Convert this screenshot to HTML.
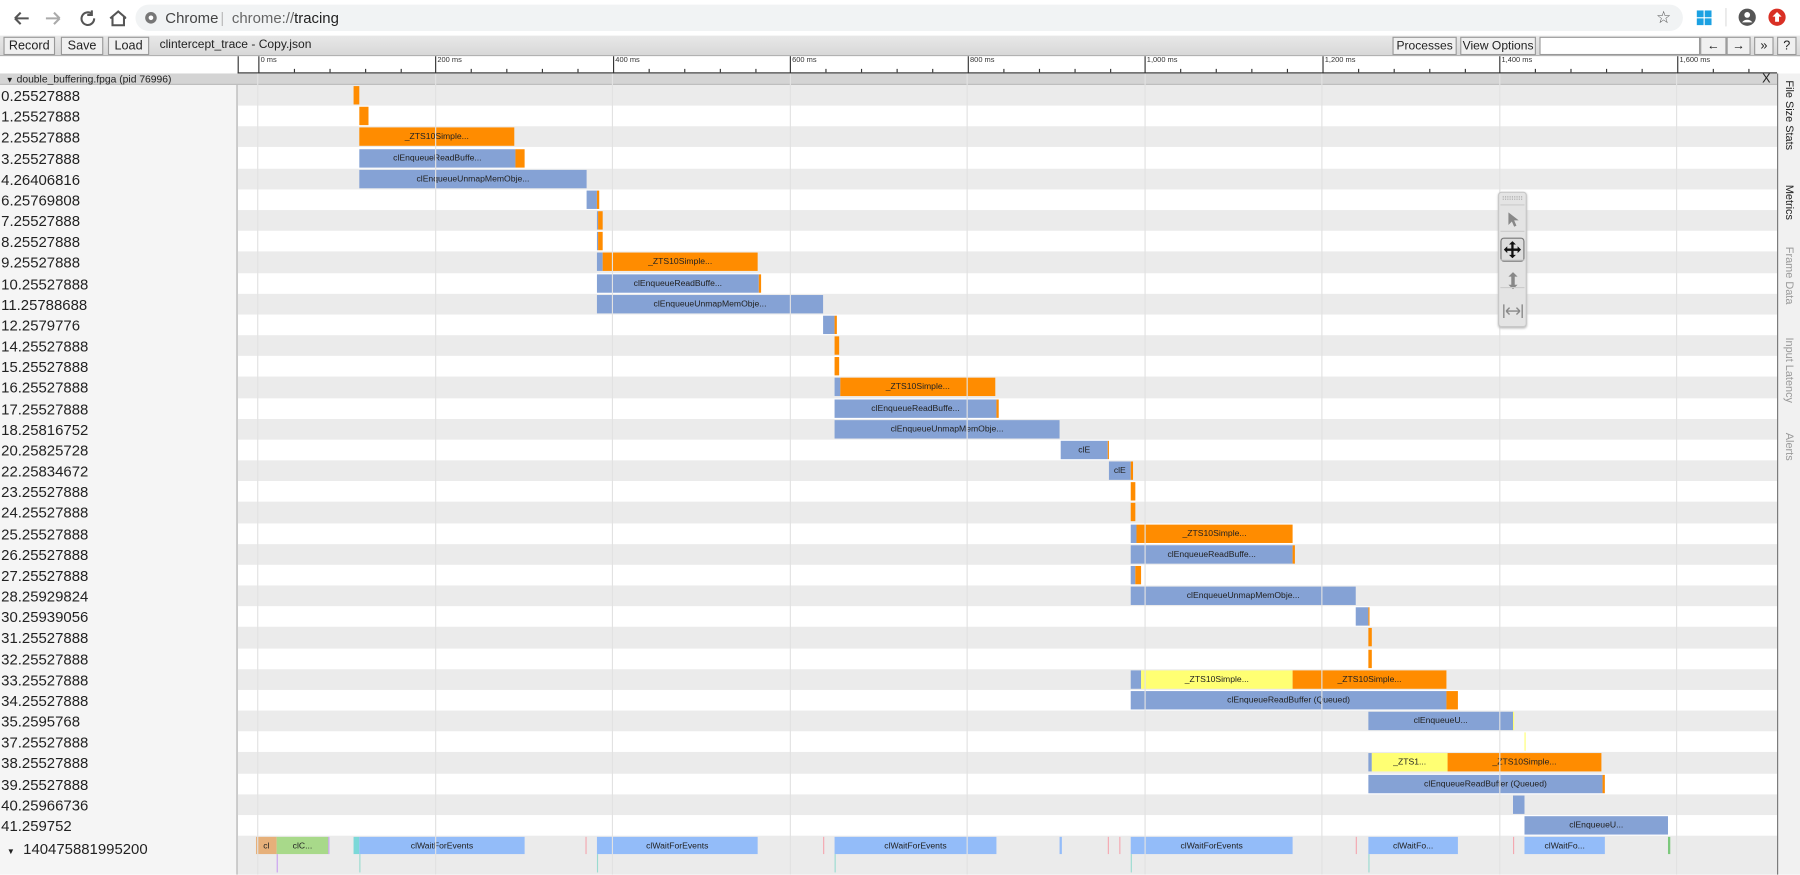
<!DOCTYPE html>
<html><head><meta charset="utf-8"><style>
*{box-sizing:border-box;margin:0;padding:0}
html,body{width:1800px;height:875px;overflow:hidden;background:#fff;font-family:"Liberation Sans",sans-serif}
#w{position:absolute;left:0;top:0;width:1568px;height:762px;transform:scale(1.14796);transform-origin:0 0;overflow:hidden;background:#fff}
.top{position:absolute;left:0;top:0;width:1568px;height:31px;background:#fff}
.omni{position:absolute;left:118px;top:4px;width:1348px;height:23px;border-radius:12px;background:#f1f3f4;font-size:13px;color:#444;line-height:23px}
.tb{position:absolute;left:0;top:31px;width:1568px;height:18px;background:linear-gradient(#e8e8e8,#d8d8d8);border-bottom:1px solid #aaa}
.btn{position:absolute;top:1px;height:16px;border:1px solid #999;background:#f0f0f0;font-size:11px;line-height:14px;text-align:center;color:#222;white-space:nowrap;overflow:hidden}
.ruler{position:absolute;left:207px;top:49px;width:1341px;height:15px;border-bottom:1px solid #333;background:#fff;border-left:1px solid #333}
.tk{position:absolute;top:0;height:15px;border-left:1px solid #333;font-size:6.5px;color:#333;padding-left:1px}
.st{position:absolute;bottom:0;height:3px;border-left:1px solid #333}
.ph{position:absolute;left:0;top:64px;width:1548px;height:10px;background:#d4d4d4;font-size:9px;line-height:10px;color:#222;border-bottom:1px solid #bbb}
.lp{position:absolute;left:0;top:74px;width:207px;height:688px;background:#f5f5f5;border-right:1px solid #aaa}
.row{position:absolute;left:0;width:1548px;height:18.17px}
.row.g .tr{background:#ebebeb}
.tr{position:absolute;left:207px;width:1341px;top:0;height:100%}
.lb{position:absolute;left:1px;top:1px;font-size:13px;line-height:17px;color:#222}
.b{position:absolute;top:1px;height:16px;font-size:7.5px;line-height:16px;text-align:center;color:#222;overflow:hidden;white-space:nowrap}
.o{background:#ff8c00}.u{background:#85a2d5}.y{background:#ffff73}.l{background:#93bcf9}
.gl{position:absolute;top:64px;width:1px;height:698px;background:#e2e2e2}
.side{position:absolute;left:1548px;top:64px;width:20px;height:698px;background:#f1f1f1;border-left:1px solid #777}
.vt{position:absolute;left:4px;writing-mode:vertical-rl;font-size:9.5px;color:#999;white-space:nowrap}
.tool{position:absolute;left:1305px;top:167px;width:25px;height:118px;background:#e4e4e4;border:1px solid #c8c8c8;border-radius:3px;box-shadow:0 1px 2px #bbb}
.sep{position:absolute;left:1px;width:21px;height:1px;background:#ccc}
</style></head><body><div id="w">
<div class="top">
<svg style="position:absolute;left:10px;top:8px" width="100" height="16" viewBox="0 0 100 16" fill="none" stroke="#555" stroke-width="1.8"><path d="M3 8h12M3 8l5-5M3 8l5 5"/><path d="M30 8h12M42 8l-5-5M42 8l-5 5" stroke="#aaa"/><path d="M70 4a5.5 5.5 0 1 0 2 4M70 1v4h-4"/><path d="M86 8l7-6 7 6M88 6.5v7.5h10v-7.5"/></svg>
<div class="omni"><svg style="position:absolute;left:8px;top:6px" width="11" height="11" viewBox="0 0 12 12"><circle cx="6" cy="6" r="5.5" fill="#777"/><circle cx="6" cy="6" r="2.2" fill="#fff"/></svg><span style="position:absolute;left:26px">Chrome</span><span style="position:absolute;left:74px;color:#bbb">|</span><span style="position:absolute;left:84px;color:#666">chrome://<span style="color:#222">tracing</span></span><span style="position:absolute;right:10px;font-size:15px;color:#555">☆</span></div>
<svg style="position:absolute;left:1478px;top:9px" width="13" height="13" viewBox="0 0 13 13" fill="#1ba1e2"><rect x="0" y="0" width="6" height="6"/><rect x="7" y="0" width="6" height="6"/><rect x="0" y="7" width="6" height="6"/><rect x="7" y="7" width="6" height="6"/></svg>
<div style="position:absolute;left:1503px;top:7px;width:1px;height:16px;background:#ddd"></div>
<svg style="position:absolute;left:1514px;top:7px" width="16" height="16" viewBox="0 0 16 16"><circle cx="8" cy="8" r="7.5" fill="#555"/><circle cx="8" cy="6" r="2.5" fill="#fff"/><path d="M3.5 12.5c2-3 7-3 9 0" fill="#fff"/></svg>
<svg style="position:absolute;left:1540px;top:7px" width="16" height="16" viewBox="0 0 16 16"><circle cx="8" cy="8" r="7.5" fill="#d93025"/><path d="M8 3.5l4 4h-2.3v4.5H6.3V7.5H4z" fill="#fff"/></svg>
</div>
<div class="tb">
<div class="btn" style="left:3px;width:45px">Record</div><div class="btn" style="left:53px;width:37px">Save</div><div class="btn" style="left:94px;width:36px">Load</div>
<div style="position:absolute;left:139px;top:2px;font-size:10.5px;color:#222">clintercept_trace - Copy.json</div>
<div class="btn" style="left:1213px;width:56px;font-size:10.5px">Processes</div><div class="btn" style="left:1272px;width:66px;font-size:10.5px">View Options</div>
<div class="btn" style="left:1341px;width:140px;background:#fff"></div>
<div class="btn" style="left:1481px;width:23px">←</div><div class="btn" style="left:1504px;width:21px">→</div><div class="btn" style="left:1528px;width:17px">»</div><div class="btn" style="left:1548px;width:17px">?</div>
</div>
<div style="position:absolute;left:0;top:49px;width:207px;height:15px;background:#fff"></div>
<div class="ruler">
<div class="tk" style="left:17px">0 ms</div><div class="tk" style="left:171px">200 ms</div><div class="tk" style="left:326px">400 ms</div><div class="tk" style="left:480px">600 ms</div><div class="tk" style="left:635px">800 ms</div><div class="tk" style="left:789px">1,000 ms</div><div class="tk" style="left:944px">1,200 ms</div><div class="tk" style="left:1098px">1,400 ms</div><div class="tk" style="left:1253px">1,600 ms</div>
<div class="st" style="left:48px"></div><div class="st" style="left:79px"></div><div class="st" style="left:110px"></div><div class="st" style="left:141px"></div><div class="st" style="left:202px"></div><div class="st" style="left:233px"></div><div class="st" style="left:264px"></div><div class="st" style="left:295px"></div><div class="st" style="left:357px"></div><div class="st" style="left:388px"></div><div class="st" style="left:419px"></div><div class="st" style="left:450px"></div><div class="st" style="left:511px"></div><div class="st" style="left:542px"></div><div class="st" style="left:573px"></div><div class="st" style="left:604px"></div><div class="st" style="left:666px"></div><div class="st" style="left:697px"></div><div class="st" style="left:728px"></div><div class="st" style="left:759px"></div><div class="st" style="left:820px"></div><div class="st" style="left:851px"></div><div class="st" style="left:882px"></div><div class="st" style="left:913px"></div><div class="st" style="left:975px"></div><div class="st" style="left:1006px"></div><div class="st" style="left:1037px"></div><div class="st" style="left:1068px"></div><div class="st" style="left:1129px"></div><div class="st" style="left:1160px"></div><div class="st" style="left:1191px"></div><div class="st" style="left:1222px"></div><div class="st" style="left:1284px"></div><div class="st" style="left:1315px"></div>
</div>
<div class="ph"><span style="padding-left:5px;font-size:7px">▼</span> double_buffering.fpga (pid 76996)<span style="position:absolute;left:1535px;font-size:11px">X</span></div>
<div class="lp"></div>
<div style="position:absolute;left:0;top:74px;width:1548px;height:688px">
<div class="row g" style="top:0"><div class="tr"></div><div class="lb">0.25527888</div><div class="b o" style="left:308px;width:5px"></div></div>
<div class="row" style="top:18.17px"><div class="tr"></div><div class="lb">1.25527888</div><div class="b o" style="left:313px;width:8px"></div></div>
<div class="row g" style="top:36.34px"><div class="tr"></div><div class="lb">2.25527888</div><div class="b o" style="left:313px;width:135px">_ZTS10Simple...</div></div>
<div class="row" style="top:54.51px"><div class="tr"></div><div class="lb">3.25527888</div><div class="b u" style="left:313px;width:136px">clEnqueueReadBuffe...</div><div class="b o" style="left:449px;width:8px"></div></div>
<div class="row g" style="top:72.68px"><div class="tr"></div><div class="lb">4.26406816</div><div class="b u" style="left:313px;width:198px">clEnqueueUnmapMemObje...</div></div>
<div class="row" style="top:90.85px"><div class="tr"></div><div class="lb">6.25769808</div><div class="b u" style="left:511px;width:9px"></div><div class="b o" style="left:520px;width:2px"></div></div>
<div class="row g" style="top:109.02px"><div class="tr"></div><div class="lb">7.25527888</div><div class="b u" style="left:520px;width:1px"></div><div class="b o" style="left:521px;width:4px"></div></div>
<div class="row" style="top:127.19px"><div class="tr"></div><div class="lb">8.25527888</div><div class="b u" style="left:520px;width:1px"></div><div class="b o" style="left:521px;width:4px"></div></div>
<div class="row g" style="top:145.36px"><div class="tr"></div><div class="lb">9.25527888</div><div class="b u" style="left:520px;width:5px"></div><div class="b o" style="left:525px;width:135px">_ZTS10Simple...</div></div>
<div class="row" style="top:163.53px"><div class="tr"></div><div class="lb">10.25527888</div><div class="b u" style="left:520px;width:141px">clEnqueueReadBuffe...</div><div class="b o" style="left:661px;width:2px"></div></div>
<div class="row g" style="top:181.7px"><div class="tr"></div><div class="lb">11.25788688</div><div class="b u" style="left:520px;width:197px">clEnqueueUnmapMemObje...</div></div>
<div class="row" style="top:199.87px"><div class="tr"></div><div class="lb">12.2579776</div><div class="b u" style="left:717px;width:10px"></div><div class="b o" style="left:727px;width:2px"></div></div>
<div class="row g" style="top:218.04px"><div class="tr"></div><div class="lb">14.25527888</div><div class="b o" style="left:727px;width:4px"></div></div>
<div class="row" style="top:236.21px"><div class="tr"></div><div class="lb">15.25527888</div><div class="b o" style="left:727px;width:4px"></div></div>
<div class="row g" style="top:254.38px"><div class="tr"></div><div class="lb">16.25527888</div><div class="b u" style="left:727px;width:5px"></div><div class="b o" style="left:732px;width:135px">_ZTS10Simple...</div></div>
<div class="row" style="top:272.55px"><div class="tr"></div><div class="lb">17.25527888</div><div class="b u" style="left:727px;width:141px">clEnqueueReadBuffe...</div><div class="b o" style="left:868px;width:2px"></div></div>
<div class="row g" style="top:290.72px"><div class="tr"></div><div class="lb">18.25816752</div><div class="b u" style="left:727px;width:196px">clEnqueueUnmapMemObje...</div></div>
<div class="row" style="top:308.89px"><div class="tr"></div><div class="lb">20.25825728</div><div class="b u" style="left:924px;width:41px">clE</div><div class="b o" style="left:965px;width:1px"></div></div>
<div class="row g" style="top:327.06px"><div class="tr"></div><div class="lb">22.25834672</div><div class="b u" style="left:966px;width:19px">clE</div><div class="b o" style="left:985px;width:2px"></div></div>
<div class="row" style="top:345.23px"><div class="tr"></div><div class="lb">23.25527888</div><div class="b o" style="left:985px;width:4px"></div></div>
<div class="row g" style="top:363.4px"><div class="tr"></div><div class="lb">24.25527888</div><div class="b o" style="left:985px;width:4px"></div></div>
<div class="row" style="top:381.57px"><div class="tr"></div><div class="lb">25.25527888</div><div class="b u" style="left:985px;width:5px"></div><div class="b o" style="left:990px;width:136px">_ZTS10Simple...</div></div>
<div class="row g" style="top:399.74px"><div class="tr"></div><div class="lb">26.25527888</div><div class="b u" style="left:985px;width:141px">clEnqueueReadBuffe...</div><div class="b o" style="left:1126px;width:2px"></div></div>
<div class="row" style="top:417.91px"><div class="tr"></div><div class="lb">27.25527888</div><div class="b u" style="left:985px;width:4px"></div><div class="b o" style="left:989px;width:5px"></div></div>
<div class="row g" style="top:436.08px"><div class="tr"></div><div class="lb">28.25929824</div><div class="b u" style="left:985px;width:196px">clEnqueueUnmapMemObje...</div></div>
<div class="row" style="top:454.25px"><div class="tr"></div><div class="lb">30.25939056</div><div class="b u" style="left:1181px;width:11px"></div><div class="b o" style="left:1192px;width:1px"></div></div>
<div class="row g" style="top:472.42px"><div class="tr"></div><div class="lb">31.25527888</div><div class="b o" style="left:1192px;width:3px"></div></div>
<div class="row" style="top:490.59px"><div class="tr"></div><div class="lb">32.25527888</div><div class="b o" style="left:1192px;width:3px"></div></div>
<div class="row g" style="top:508.76px"><div class="tr"></div><div class="lb">33.25527888</div><div class="b u" style="left:985px;width:9px"></div><div class="b y" style="left:994px;width:132px">_ZTS10Simple...</div><div class="b o" style="left:1126px;width:134px">_ZTS10Simple...</div></div>
<div class="row" style="top:526.93px"><div class="tr"></div><div class="lb">34.25527888</div><div class="b u" style="left:985px;width:275px">clEnqueueReadBuffer (Queued)</div><div class="b o" style="left:1260px;width:10px"></div></div>
<div class="row g" style="top:545.1px"><div class="tr"></div><div class="lb">35.2595768</div><div class="b u" style="left:1192px;width:126px">clEnqueueU...</div><div class="b y" style="left:1318px;width:1px"></div></div>
<div class="row" style="top:563.27px"><div class="tr"></div><div class="lb">37.25527888</div><div class="b y" style="left:1328px;width:1px"></div></div>
<div class="row g" style="top:581.44px"><div class="tr"></div><div class="lb">38.25527888</div><div class="b u" style="left:1192px;width:3px"></div><div class="b y" style="left:1195px;width:66px">_ZTS1...</div><div class="b o" style="left:1261px;width:134px">_ZTS10Simple...</div></div>
<div class="row" style="top:599.61px"><div class="tr"></div><div class="lb">39.25527888</div><div class="b u" style="left:1192px;width:204px">clEnqueueReadBuffer (Queued)</div><div class="b o" style="left:1396px;width:2px"></div></div>
<div class="row g" style="top:617.78px"><div class="tr"></div><div class="lb">40.25966736</div><div class="b u" style="left:1318px;width:10px"></div></div>
<div class="row" style="top:635.95px"><div class="tr"></div><div class="lb">41.259752</div><div class="b u" style="left:1328px;width:125px">clEnqueueU...</div></div>
<div class="row g" style="top:654.12px;height:34px"><div class="tr"></div><div class="lb" style="left:6px;top:3px"><span style="font-size:7px">▼</span> &nbsp;140475881995200</div>
<div class="b" style="left:223px;width:18px;height:15px;background:#e6b07a">cl</div><div class="b" style="left:241px;width:45px;height:15px;background:#a8d98a">clC...</div><div class="b" style="left:286px;width:1px;height:15px;background:#c9a0f0"></div>
<div class="b" style="left:308px;width:5px;height:15px;background:#7bd8d8"></div>
<div class="b l" style="left:313px;width:144px;height:15px">clWaitForEvents</div><div class="b" style="left:510px;width:1px;height:15px;background:#f4a7b0"></div>
<div class="b l" style="left:520px;width:140px;height:15px">clWaitForEvents</div><div class="b" style="left:717px;width:1px;height:15px;background:#f4a7b0"></div>
<div class="b l" style="left:727px;width:141px;height:15px">clWaitForEvents</div><div class="b" style="left:923px;width:2px;height:15px;background:#93bcf9"></div><div class="b" style="left:965px;width:1px;height:15px;background:#f4a7b0"></div><div class="b" style="left:975px;width:1px;height:15px;background:#f4a7b0"></div>
<div class="b l" style="left:985px;width:141px;height:15px">clWaitForEvents</div><div class="b" style="left:1181px;width:1px;height:15px;background:#f4a7b0"></div>
<div class="b l" style="left:1192px;width:78px;height:15px">clWaitFo...</div><div class="b" style="left:1318px;width:1px;height:15px;background:#f4a7b0"></div>
<div class="b l" style="left:1328px;width:70px;height:15px">clWaitFo...</div><div class="b" style="left:1453px;width:2px;height:15px;background:#7cc87c"></div>
<div class="b" style="left:241px;top:16px;width:1px;height:16px;background:#c9a0f0"></div><div class="b" style="left:313px;top:16px;width:1px;height:16px;background:#9adbd0"></div><div class="b" style="left:520px;top:16px;width:1px;height:16px;background:#9adbd0"></div><div class="b" style="left:727px;top:16px;width:1px;height:16px;background:#9adbd0"></div><div class="b" style="left:985px;top:16px;width:1px;height:16px;background:#9adbd0"></div><div class="b" style="left:1192px;top:16px;width:1px;height:16px;background:#9adbd0"></div>
</div>
</div>
<div class="gl" style="left:224px"></div><div class="gl" style="left:379px"></div><div class="gl" style="left:533px"></div><div class="gl" style="left:688px"></div><div class="gl" style="left:842px"></div><div class="gl" style="left:997px"></div><div class="gl" style="left:1151px"></div><div class="gl" style="left:1306px"></div><div class="gl" style="left:1460px"></div>
<div class="tool">
<div style="position:absolute;left:3px;top:3px;width:17px;height:3px;border-top:1px dotted #aaa;border-bottom:1px dotted #aaa"></div>
<div class="sep" style="top:10px"></div>
<svg style="position:absolute;left:7px;top:17px" width="10" height="13" viewBox="0 0 10 13"><path d="M1 0v11l3-3 2 4.5 2-1-2-4.5h4z" fill="#888"/></svg>
<div class="sep" style="top:33px"></div>
<div style="position:absolute;left:1px;top:39px;width:21px;height:21px;border:1px solid #777;border-radius:3px;background:#ddd"></div>
<svg style="position:absolute;left:4px;top:42px" width="15" height="15" viewBox="0 0 15 15" fill="#111"><path d="M7.5 0l3 3h-2v3.5h3.5v-2l3 3-3 3v-2h-3.5v3.5h2l-3 3-3-3h2v-3.5H3v2l-3-3 3-3v2h3.5V3h-2z"/></svg>
<div class="sep" style="top:58px"></div>
<svg style="position:absolute;left:7px;top:69px" width="10" height="15" viewBox="0 0 10 15" fill="#888"><path d="M5 0l4 4H6.5v7H9l-4 4-4-4h2.5V4H1z"/></svg>
<div class="sep" style="top:82px"></div>
<svg style="position:absolute;left:3px;top:97px" width="18" height="12" viewBox="0 0 18 12" fill="none" stroke="#888" stroke-width="1.2"><path d="M1 0v12M17 0v12M3 6h12M3 6l3-3M3 6l3 3M15 6l-3-3M15 6l-3 3"/></svg>
</div>
<div class="side">
<div class="vt" style="top:6px;color:#222">File Size Stats</div>
<div class="vt" style="top:97px;color:#222">Metrics</div>
<div class="vt" style="top:151px">Frame Data</div>
<div class="vt" style="top:230px">Input Latency</div>
<div class="vt" style="top:313px">Alerts</div>
</div>
</div></body></html>
